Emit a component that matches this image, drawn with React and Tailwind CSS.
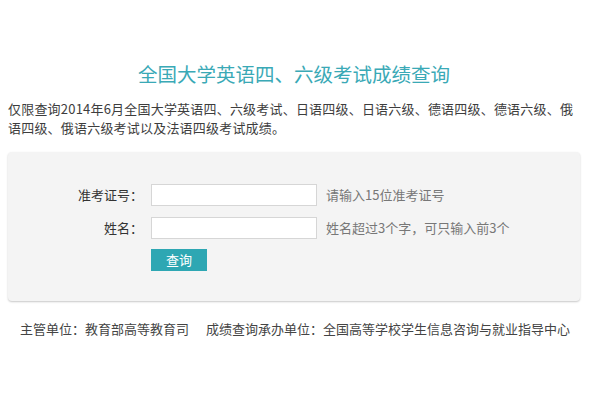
export default function App() {
  const font = { fontFamily: '"Noto Sans CJK SC", "Noto Sans", sans-serif' };
  return (
    <div className="w-[600px] h-[400px] bg-white overflow-hidden" style={font}>
      <div className="ml-[8px] w-[572px]">
        <div className="mt-[64px] h-[20px] text-center text-[19.5px] leading-[20px] text-[#3aa9b6]">
          全国大学英语四、六级考试成绩查询
        </div>
        <p className="mt-[15px] text-[13px] leading-[19px] text-[#3d3d3d] whitespace-nowrap tracking-[0.2px]">
          仅限查询2014年6月全国大学英语四、六级考试、日语四级、日语六级、德语四级、德语六级、俄
          <br />
          语四级、俄语六级考试以及法语四级考试成绩。
        </p>
        <div className="mt-[15px] h-[149px] rounded-[4px] bg-[#f4f4f4] shadow-[0_1px_2px_rgba(0,0,0,0.22)] pt-[32px]">
          <div className="flex items-center h-[22px]">
            <span className="w-[135px] text-right text-[13px] text-[#333]">准考证号：</span>
            <input className="ml-[8px] w-[166px] h-[22px] border border-[#d6d6d6] bg-white outline-none" />
            <span className="ml-[9px] text-[13px] text-[#777]">请输入15位准考证号</span>
          </div>
          <div className="flex items-center h-[22px] mt-[11px]">
            <span className="w-[135px] text-right text-[13px] text-[#333]">姓名：</span>
            <input className="ml-[8px] w-[166px] h-[22px] border border-[#d6d6d6] bg-white outline-none" />
            <span className="ml-[9px] text-[13px] text-[#777]">姓名超过3个字，可只输入前3个</span>
          </div>
          <div className="flex mt-[10px]">
            <button className="ml-[143px] w-[56px] h-[22px] bg-[#2ea7b3] text-white text-[13px] leading-[22px]">
              查询
            </button>
          </div>
        </div>
        <div className="mt-[18px] pl-[12px] h-[20px] leading-[20px] text-[13px] text-[#444] whitespace-nowrap flex">
          <span>主管单位：教育部高等教育司</span>
          <span className="ml-[17px]">成绩查询承办单位：全国高等学校学生信息咨询与就业指导中心</span>
        </div>
      </div>
    </div>
  );
}
